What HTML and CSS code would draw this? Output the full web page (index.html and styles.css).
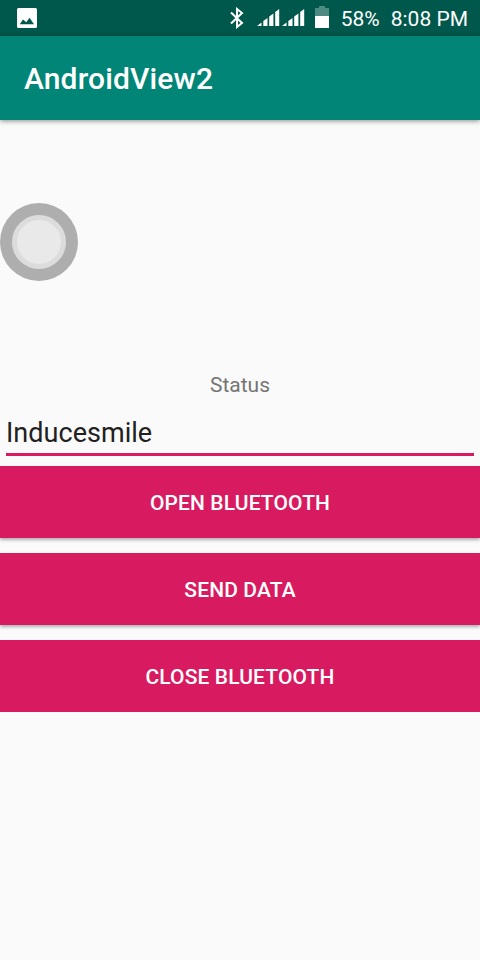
FILE: index.html
```html
<!DOCTYPE html>
<html lang="en">
<head>
<meta charset="utf-8">
<title>AndroidView2</title>
<link rel="stylesheet" href="styles.css">
</head>
<body>
<header class="status-bar">
  <svg class="picture" viewBox="0 0 20 20"><path fill="#fff" fill-rule="evenodd" d="M1.500 0h17Q20 0 20 1.500v17q0 1.500-1.500 1.500h-17Q0 20 0 18.500v-17Q0 0 1.500 0ZM2.800 16.300H17L12.500 9.800l-3.200 4.500-3.300-2.800Z"/></svg>
  <svg class="bluetooth" viewBox="0 0 14 22"><path fill="none" stroke="#fff" stroke-width="2" d="M1 5.500 12 16l-5 4v-18L12 6 1 16.500"/></svg>
  <svg class="signal" viewBox="0 0 48 18"><path fill="#fff" d="M0 17l4.500-3.500V17ZM6.300 12.100l4.200-3.200V17H6.300ZM12.200 7.600l4.200-3.200V17h-4.200ZM18.200 3l4-3v17h-4ZM25 17l4.500-3.500V17ZM31.300 12.100l4.200-3.200V17h-4.200ZM37.200 7.600l4.200-3.200V17h-4.200ZM43.200 3l4-3v17h-4Z"/></svg>
  <svg class="battery" viewBox="0 0 14 22"><path fill="#4d8a81" d="M4 0h6v2h4v9H0V2h4Z"/><path fill="#fff" d="M0 10h14v12H0Z"/></svg>
  <span class="percent">58%</span>
  <time class="clock">8:08 PM</time>
</header>
<div class="app-bar"><h1>AndroidView2</h1></div>
<main>
  <div class="assistive"><span></span></div>
  <p class="status">Status</p>
  <div class="field">Inducesmile</div>
  <button>OPEN BLUETOOTH</button>
  <button>SEND DATA</button>
  <button class="last">CLOSE BLUETOOTH</button>
</main>
</body>
</html>
```
FILE: styles.css
```css
* { box-sizing: border-box; }
body { margin: 0; height: 960px; background: #fafafa; font-family: Roboto, sans-serif; overflow: hidden; }
.status-bar { height: 36px; background: #00574b; color: #fff; display: flex; align-items: center; padding: 0 12px 0 17px; font-size: 21px; }
.picture { width: 20px; height: 20px; margin-right: auto; }
.bluetooth { width: 14px; height: 22px; margin-right: 13px; }
.signal { width: 48px; height: 18px; margin-right: 10px; }
.battery { width: 14px; height: 22px; margin: 0 12px 2px 0; }
.percent { margin-right: 11px; padding-top: 2px; }
.clock { padding-top: 2px; }
.app-bar { height: 84px; padding-left: 24px; background: #008577; color: #fff; display: flex; align-items: center; box-shadow: 0 1px 5px rgba(0,0,0,.45); }
h1 { margin: 0; font-size: 30px; font-weight: 500; letter-spacing: .14px; }
main { display: flex; flex-direction: column; padding-top: 83px; }
.assistive { width: 78px; height: 78px; border-radius: 50%; background: #aeaeae; padding: 12px; }
.assistive span { display: block; width: 54px; height: 54px; border-radius: 50%; background: #e9e9e9; border: 5px solid #dcdcdc; }
.status { margin: 90px 0 0; height: 28px; line-height: 28px; text-align: center; font-size: 21px; color: #757575; }
.field { height: 57px; margin: 0 6px 10px; padding-top: 16px; font-size: 27px; line-height: 36px; letter-spacing: .03px; color: #212121; border-bottom: 3px solid #d81b60; }
button { height: 72px; margin: 0 0 15px; padding: 2px 0 0; border: 0; background: #d81b60; color: #fff; font: 500 21px Roboto, sans-serif; letter-spacing: .12px; box-shadow: 0 2px 3px rgba(0,0,0,.3); }
.last { box-shadow: none; }
```
